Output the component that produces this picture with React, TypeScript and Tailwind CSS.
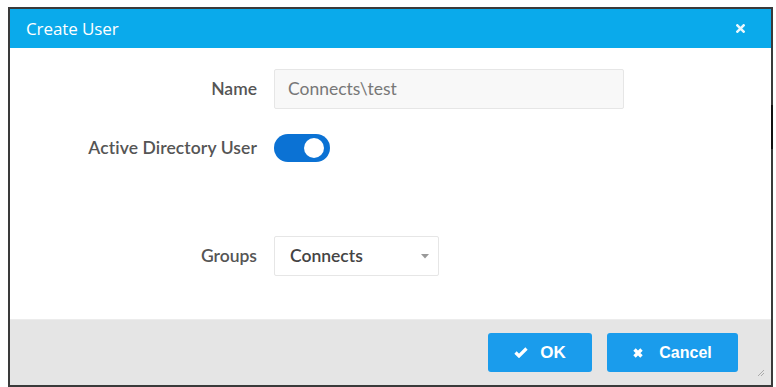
import React from "react";

export default function App() {
  return (
    <div className="w-[776px] h-[387px] bg-white relative overflow-hidden" style={{ fontFamily: "Lato, 'Open Sans', sans-serif" }}>
      <div className="absolute left-[8px] top-[7px] w-[765px] h-[380px] border-2 border-[#3a3a3a] flex flex-col bg-white">
        <div className="h-[39px] bg-[#0aaaeb] flex items-center justify-between pl-[16px] pr-[26px] shrink-0">
          <span className="text-white text-[17px] tracking-[-0.1px]" style={{ fontFamily: "'Open Sans', sans-serif" }}>Create User</span>
          <svg width="9" height="9" viewBox="0 0 10 10">
            <path d="M1.5 1.5 L8.5 8.5 M8.5 1.5 L1.5 8.5" stroke="#e8f7fd" strokeWidth="2.8" strokeLinecap="square" />
          </svg>
        </div>
        <div className="flex-1 flex flex-col pt-[21px]">
          <div className="flex items-center h-[40px]">
            <div className="w-[264px] text-right pr-[17px] text-[17.5px] font-semibold text-[#555]">Name</div>
            <div className="w-[350px] h-[40px] bg-[#f8f8f8] border border-[#e6e6e6] rounded-[2px] flex items-center pl-[13px] text-[17.5px] text-[#777]">
              Connects\test
            </div>
          </div>
          <div className="flex items-center h-[28px] mt-[25px]">
            <div className="w-[264px] text-right pr-[17px] text-[17.5px] font-semibold text-[#555] tracking-[0.1px]">Active Directory User</div>
            <div className="w-[56px] h-[28px] rounded-full bg-[#0b72d4] relative">
              <div className="absolute right-[6px] top-[4px] w-[20px] h-[20px] rounded-full bg-white" />
            </div>
          </div>
          <div className="flex items-center h-[40px] mt-[74px]">
            <div className="w-[264px] text-right pr-[17px] text-[17.5px] font-semibold text-[#555]">Groups</div>
            <div className="w-[165px] h-[40px] bg-white border border-[#e6e6e6] rounded-[2px] flex items-center justify-between pl-[15px] pr-[9px] text-[17.5px] font-semibold text-[#444]">
              <span>Connects</span>
              <svg width="8" height="5" viewBox="0 0 8 5"><path d="M0 0 L8 0 L4 4.5 Z" fill="#999" /></svg>
            </div>
          </div>
        </div>
        <div className="h-[66px] bg-[#e5e5e5] border-t border-[#ececec] flex items-center justify-end pr-[33px] gap-[15px] shrink-0 relative">
          <button className="w-[104px] h-[39px] rounded-[3px] bg-[#1a9cec] text-white flex items-center justify-center gap-[12px] text-[17px] font-bold" style={{ fontFamily: "'Liberation Sans', Arial, sans-serif" }}>
            <svg width="14" height="11" viewBox="0 0 14 11"><path d="M1.5 5.5 L5 9 L12.5 1.5" stroke="white" strokeWidth="3.2" fill="none" /></svg>
            <span>OK</span>
          </button>
          <button className="w-[131px] h-[39px] rounded-[3px] bg-[#1a9cec] text-white flex items-center justify-center gap-[16px] text-[16px] font-bold" style={{ fontFamily: "'Liberation Sans', Arial, sans-serif" }}>
            <svg width="10" height="10" viewBox="0 0 10 10"><path d="M1.5 1.5 L8.5 8.5 M8.5 1.5 L1.5 8.5" stroke="white" strokeWidth="3.4" /></svg>
            <span>Cancel</span>
          </button>
          <svg className="absolute right-[6px] bottom-[8px]" width="8" height="8" viewBox="0 0 8 8"><path d="M1 7 L7 1 M4 7 L7 4" stroke="#aaa" strokeWidth="1" /></svg>
        </div>
        <div className="absolute right-[-2px] top-[96px] w-[2px] h-[44px] bg-[#111]" />
      </div>
    </div>
  );
}
